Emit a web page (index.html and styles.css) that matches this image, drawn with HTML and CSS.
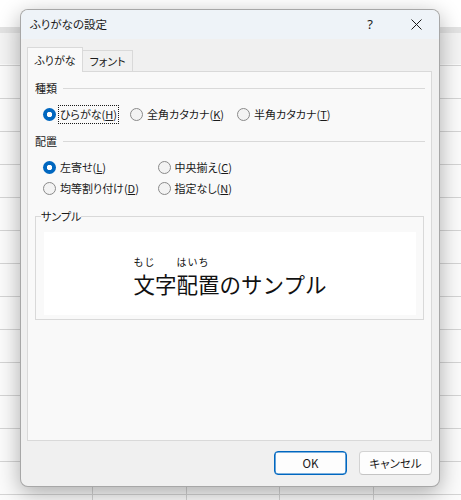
FILE: index.html
```html
<!DOCTYPE html>
<html lang="ja">
<head>
<meta charset="utf-8">
<title>ふりがなの設定</title>
<link rel="stylesheet" href="styles.css">
</head>
<body>
<div class="dialog">
  <div class="titlebar">
    <span class="title">ふりがなの設定</span>
    <span class="tb-btn help">?</span>
    <span class="tb-btn close">
      <svg width="11" height="11" viewBox="0 0 11 11"><path d="M0.5 0.5 L10.5 10.5 M10.5 0.5 L0.5 10.5" stroke="#1a1a1a" stroke-width="1" fill="none"/></svg>
    </span>
  </div>
  <div class="body">
    <div class="tabs">
      <div class="tab active">ふりがな</div>
      <div class="tab">フォント</div>
    </div>
    <div class="panel">
      <div class="section-head"><span>種類</span><span class="rule"></span></div>
      <div class="row-flex">
        <div class="opt"><span class="radio checked"></span><span class="lbl focus">ひらがな(<u>H</u>)</span></div>
        <div class="opt"><span class="radio"></span><span class="lbl">全角カタカナ(<u>K</u>)</span></div>
        <div class="opt"><span class="radio"></span><span class="lbl">半角カタカナ(<u>T</u>)</span></div>
      </div>
      <div class="section-head sec2"><span>配置</span><span class="rule"></span></div>
      <div class="grid-opts">
        <div class="opt"><span class="radio checked"></span><span class="lbl">左寄せ(<u>L</u>)</span></div>
        <div class="opt"><span class="radio"></span><span class="lbl">中央揃え(<u>C</u>)</span></div>
        <div class="opt"><span class="radio"></span><span class="lbl">均等割り付け(<u>D</u>)</span></div>
        <div class="opt"><span class="radio"></span><span class="lbl">指定なし(<u>N</u>)</span></div>
      </div>
      <fieldset class="group">
        <legend>サンプル</legend>
        <div class="sample">
          <div class="sample-text"><span class="rb"><span class="rt">もじ</span>文字</span><span class="rb"><span class="rt">はいち</span>配置</span>のサンプル</div>
        </div>
      </fieldset>
    </div>
    <div class="footer">
      <button class="btn primary">OK</button>
      <button class="btn">キャンセル</button>
    </div>
  </div>
</div>
</body>
</html>
```
FILE: styles.css
```css
html, body {
  margin: 0;
  padding: 0;
}
body {
  width: 461px;
  height: 500px;
  overflow: hidden;
  font-family: "Noto Sans CJK JP", "Noto Sans", sans-serif;
  font-size: 11px;
  color: #1a1a1a;
  background-color: #fbfbfb;
  background-image:
    linear-gradient(to bottom, #ffffff 0, #ffffff 27px, #e3e3e3 27px, #e3e3e3 33px, #f4f4f4 33px, #f4f4f4 64px, transparent 64px),
    repeating-linear-gradient(to bottom, transparent 0, transparent 32px, #d4d4d4 32px, #d4d4d4 33px),
    repeating-linear-gradient(to right, transparent 0, transparent 92px, #d4d4d4 92px, #d4d4d4 93px, transparent 93px, transparent 93.7px);
  background-repeat: no-repeat, repeat, repeat;
  font-feature-settings: "palt";
}
.dialog {
  margin: 9px 0 0 20px;
  width: 420px;
  height: 478px;
  box-sizing: border-box;
  border: 1px solid rgba(0, 0, 0, 0.3);
  border-radius: 8px;
  overflow: hidden;
  background: #f0f0f0;
  box-shadow: 0 6px 22px rgba(0, 0, 0, 0.32);
  display: flex;
  flex-direction: column;
}
.titlebar {
  height: 29px;
  flex: none;
  background: #eef3f8;
  display: flex;
  align-items: center;
  padding-left: 9px;
}
.title {
  flex: 1;
  font-size: 11.5px;
  line-height: 16px;
  padding-bottom: 1px;
}
.tb-btn {
  width: 46px;
  height: 29px;
  display: flex;
  align-items: center;
  justify-content: center;
}
.help {
  font-size: 13px;
  font-family: "Noto Sans", sans-serif;
  padding-bottom: 2px;
  box-sizing: border-box;
}
.body {
  flex: 1;
  display: flex;
  flex-direction: column;
  padding: 8px 7px 0 6px;
}
.tabs {
  display: flex;
  align-items: flex-end;
  height: 24px;
}
.tab {
  box-sizing: border-box;
  height: 21px;
  width: 50px;
  border: 1px solid #d9d9d9;
  border-left: none;
  border-bottom: none;
  background: #f0f0f0;
  display: flex;
  align-items: center;
  justify-content: center;
  line-height: 16px;
}
.tab.active {
  width: 56px;
  height: 25px;
  border-left: 1px solid #d9d9d9;
  background: #f9f9f9;
  position: relative;
  margin-bottom: -1px;
  z-index: 1;
  padding-bottom: 1px;
}
.panel {
  box-sizing: border-box;
  height: 370px;
  border: 1px solid #d9d9d9;
  background: #f9f9f9;
  padding: 8px 7px 0 7px;
  display: flex;
  flex-direction: column;
}
.section-head {
  display: flex;
  align-items: center;
  height: 16px;
  line-height: 16px;
}
.section-head .rule {
  flex: 1;
  height: 1px;
  background: #d9d9d9;
  margin-left: 6px;
  margin-right: -1px;
}
.sec2 {
  margin-top: 9px;
}
.row-flex {
  display: flex;
  gap: 11px;
  margin-top: 8px;
  margin-left: 8px;
  height: 20px;
  align-items: center;
}
.grid-opts {
  display: grid;
  grid-template-columns: 114.5px auto;
  grid-auto-rows: 21px;
  margin-top: 8px;
  margin-left: 8px;
}
.opt {
  display: flex;
  align-items: center;
}
.radio {
  box-sizing: border-box;
  width: 13px;
  height: 13px;
  border-radius: 50%;
  border: 1px solid #8a8a8a;
  background: #f3f3f3;
  margin-right: 2px;
  flex: none;
}
.radio.checked {
  border: none;
  background: radial-gradient(circle, #ffffff 0, #ffffff 2.4px, #0067c0 3px);
}
.lbl {
  border: 1px dotted transparent;
  padding: 0 1px;
  line-height: 17px;
}
.lbl.focus {
  border-color: #1a1a1a;
}
u {
  text-underline-offset: 1px;
}
.group {
  margin: 9px 0 0 0;
  padding: 0;
  border: 1px solid #d9d9d9;
  min-width: 0;
}
.group legend {
  padding: 0;
  margin-left: 5px;
  line-height: 16px;
}
.sample {
  margin: 8px 7px 4px 8px;
  height: 83px;
  background: #ffffff;
  box-sizing: border-box;
  padding-top: 24px;
  display: flex;
  justify-content: center;
  align-items: flex-start;
}
.sample-text {
  font-size: 21.5px;
  line-height: 24px;
  font-feature-settings: normal;
  color: #111;
  white-space: nowrap;
}
.rb {
  display: inline-block;
}
.rt {
  display: block;
  font-size: 10px;
  line-height: 12px;
  letter-spacing: 1px;
  margin-bottom: 4px;
}
.footer {
  display: flex;
  justify-content: flex-end;
  gap: 12px;
  padding-top: 10px;
}
.btn {
  box-sizing: border-box;
  width: 73px;
  height: 24px;
  border-radius: 4px;
  border: 1px solid #d3d3d3;
  border-bottom-color: #c4c4c4;
  background: #fdfdfd;
  font-family: "Noto Sans CJK JP", "Noto Sans", sans-serif;
  font-size: 11.5px;
  color: #1a1a1a;
  padding: 0;
  line-height: 16px;
  font-feature-settings: "palt";
}
.btn.primary {
  border: 1px solid #0067c0;
  box-shadow: inset 0 0 0 0.6px #0067c0;
}
```
